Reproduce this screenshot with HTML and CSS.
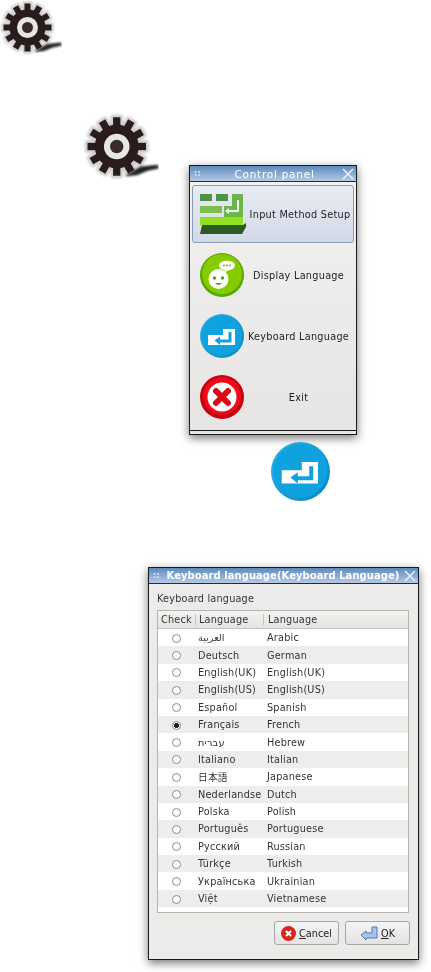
FILE: index.html
```html
<!DOCTYPE html>
<html lang="en">
<head>
  <meta charset="UTF-8" />
  <meta name="viewport" content="width=device-width, initial-scale=1" />
  <title>Control panel</title>
  <link rel="stylesheet" href="styles.css">
</head>
<body>

  <svg class="defs" width="0" height="0">
    <defs>
      <filter id="soft"><feGaussianBlur stdDeviation="0.8" /></filter>
      <g id="gear-shape">
        <circle cx="27.5" cy="27.5" r="18" />
        <rect x="24.5" y="3.5" width="6" height="48" />
        <rect x="24.5" y="3.5" width="6" height="48" transform="rotate(30 27.5 27.5)" />
        <rect x="24.5" y="3.5" width="6" height="48" transform="rotate(60 27.5 27.5)" />
        <rect x="24.5" y="3.5" width="6" height="48" transform="rotate(90 27.5 27.5)" />
        <rect x="24.5" y="3.5" width="6" height="48" transform="rotate(120 27.5 27.5)" />
        <rect x="24.5" y="3.5" width="6" height="48" transform="rotate(150 27.5 27.5)" />
      </g>
      <symbol id="gear" viewBox="0 0 62 55">
        <use href="#gear-shape" fill="#cfcfcf" stroke="#cfcfcf" stroke-width="4.5" stroke-linejoin="round" filter="url(#soft)" />
        <path d="M34 52 L42 47 L47 44 L61 42.5 L62 45.5 L53 47.5 L44 51 Z" fill="#222" filter="url(#soft)" />
        <use href="#gear-shape" fill="#2a1c1c" />
        <circle cx="27.5" cy="27.5" r="10.5" fill="#e8e6e4" />
        <circle cx="27.5" cy="27.5" r="5.5" fill="#3a2a2a" />
      </symbol>
      <linearGradient id="blue-disc" x1="0" y1="0" x2="1" y2="1">
        <stop offset="0" stop-color="#2fb4e8" />
        <stop offset="1" stop-color="#0a84c0" />
      </linearGradient>
      <symbol id="enter-disc" viewBox="0 0 44 44">
        <circle cx="22" cy="22" r="22" fill="url(#blue-disc)" />
        <circle cx="22" cy="21.5" r="20" fill="#0fa2de" />
        <path d="M8 21 H23 V15 H35 V31 H8 Z" fill="#fff" />
        <path d="M28.5 18 H31.5 V28.5 H20 V31 L14.5 26.5 L20 22.5 V25.5 H28.5 Z" fill="#0fa2de" />
      </symbol>
    </defs>
  </svg>

  <svg class="gear-small" width="62" height="55"><use href="#gear" /></svg>
  <svg class="gear-large" width="76" height="67"><use href="#gear" /></svg>

  <section class="window panel">
    <header class="titlebar">
      <span class="grip">::</span>
      <span class="title">Control panel</span>
      <svg class="close" width="12" height="12" viewBox="0 0 12 12"><path d="M1 1 L11 11 M11 1 L1 11" /></svg>
    </header>
    <div class="panel-body">
      <button class="panel-item active">
        <svg width="48" height="42" viewBox="0 0 48 42">
          <path d="M3 32 H44 L47 30 V34 L43 41 H1 Z" fill="#2c5a22" />
          <rect x="1" y="1" width="12" height="7" fill="#4d9248" />
          <rect x="17" y="1" width="12" height="7" fill="#4d9248" />
          <path d="M33 1 H44 V24 H25 V13 H33 Z" fill="#6cb54c" />
          <rect x="1" y="13" width="22" height="7" fill="#7cc04a" />
          <path d="M38 7 H40 V19 H30 V21 L26 18 L30 15 V17 H38 Z" fill="#eef7e4" />
          <rect x="1" y="24" width="43" height="8" fill="#90e020" />
        </svg>
        <span class="item-label">Input Method Setup</span>
      </button>
      <button class="panel-item">
        <svg width="44" height="44" viewBox="0 0 44 44">
          <circle cx="22" cy="22" r="22" fill="#58a800" />
          <circle cx="22" cy="21" r="20" fill="#84cc00" />
          <circle cx="18.5" cy="26" r="10" fill="#fff" />
          <circle cx="14.5" cy="25" r="1.7" fill="#5aa000" />
          <circle cx="22.5" cy="25" r="1.7" fill="#5aa000" />
          <path d="M15 30 H22 Q18.5 34 15 30 Z" fill="#5aa000" />
          <path d="M25 17 L22 21 L29 17 Z" fill="#fff" />
          <ellipse cx="27" cy="12.5" rx="8" ry="4.8" fill="#fff" />
          <circle cx="24" cy="12.5" r="1" fill="#6ab000" />
          <circle cx="27" cy="12.5" r="1" fill="#6ab000" />
          <circle cx="30" cy="12.5" r="1" fill="#6ab000" />
        </svg>
        <span class="item-label">Display Language</span>
      </button>
      <button class="panel-item">
        <svg width="44" height="44"><use href="#enter-disc" /></svg>
        <span class="item-label">Keyboard Language</span>
      </button>
      <button class="panel-item">
        <svg width="44" height="44" viewBox="0 0 44 44">
          <circle cx="22" cy="22" r="22" fill="#c80010" />
          <circle cx="22" cy="21" r="19" fill="#ee0a1a" />
          <circle cx="22" cy="22" r="14.5" fill="#fff" />
          <path d="M16 16 L28 28 M28 16 L16 28" stroke="#d80a18" stroke-width="6" stroke-linecap="round" />
        </svg>
        <span class="item-label">Exit</span>
      </button>
    </div>
    <div class="panel-foot"></div>
  </section>

  <svg class="enter-large" width="59" height="59"><use href="#enter-disc" /></svg>

  <section class="window dialog">
    <header class="titlebar">
      <span class="grip">::</span>
      <span class="title bold">Keyboard language(Keyboard Language)</span>
      <svg class="close" width="12" height="12" viewBox="0 0 12 12"><path d="M1 1 L11 11 M11 1 L1 11" /></svg>
    </header>
    <div class="dialog-body">
      <p class="dialog-label">Keyboard language</p>
      <div class="list">
        <div class="list-head">
          <span class="col-check">Check</span>
          <span class="col-native">Language</span>
          <span class="col-english">Language</span>
        </div>
        <div class="row"><span class="col-check"><i class="radio"></i></span><span class="col-native">العربية</span><span class="col-english">Arabic</span></div>
        <div class="row"><span class="col-check"><i class="radio"></i></span><span class="col-native">Deutsch</span><span class="col-english">German</span></div>
        <div class="row"><span class="col-check"><i class="radio"></i></span><span class="col-native">English(UK)</span><span class="col-english">English(UK)</span></div>
        <div class="row"><span class="col-check"><i class="radio"></i></span><span class="col-native">English(US)</span><span class="col-english">English(US)</span></div>
        <div class="row"><span class="col-check"><i class="radio"></i></span><span class="col-native">Español</span><span class="col-english">Spanish</span></div>
        <div class="row"><span class="col-check"><i class="radio on"></i></span><span class="col-native">Français</span><span class="col-english">French</span></div>
        <div class="row"><span class="col-check"><i class="radio"></i></span><span class="col-native">עברית</span><span class="col-english">Hebrew</span></div>
        <div class="row"><span class="col-check"><i class="radio"></i></span><span class="col-native">Italiano</span><span class="col-english">Italian</span></div>
        <div class="row"><span class="col-check"><i class="radio"></i></span><span class="col-native">日本語</span><span class="col-english">Japanese</span></div>
        <div class="row"><span class="col-check"><i class="radio"></i></span><span class="col-native">Nederlandse</span><span class="col-english">Dutch</span></div>
        <div class="row"><span class="col-check"><i class="radio"></i></span><span class="col-native">Polska</span><span class="col-english">Polish</span></div>
        <div class="row"><span class="col-check"><i class="radio"></i></span><span class="col-native">Português</span><span class="col-english">Portuguese</span></div>
        <div class="row"><span class="col-check"><i class="radio"></i></span><span class="col-native">Русский</span><span class="col-english">Russian</span></div>
        <div class="row"><span class="col-check"><i class="radio"></i></span><span class="col-native">Türkçe</span><span class="col-english">Turkish</span></div>
        <div class="row"><span class="col-check"><i class="radio"></i></span><span class="col-native">Українська</span><span class="col-english">Ukrainian</span></div>
        <div class="row"><span class="col-check"><i class="radio"></i></span><span class="col-native">Việt</span><span class="col-english">Vietnamese</span></div>
      </div>
      <div class="actions">
        <button class="btn">
          <svg width="15" height="15" viewBox="0 0 15 15">
            <circle cx="7.5" cy="7.5" r="7.5" fill="#d8281c" />
            <path d="M5 5 L10 10 M10 5 L5 10" stroke="#fff" stroke-width="2" />
          </svg>
          <span><u>C</u>ancel</span>
        </button>
        <button class="btn">
          <svg width="18" height="15" viewBox="0 0 18 15">
            <path d="M1 9 L6 5 V7 H12 V1 H17 V12 H6 V14 Z" fill="#a8c4e8" stroke="#4a78b8" stroke-width="1" />
          </svg>
          <span><u>O</u>K</span>
        </button>
      </div>
    </div>
  </section>

</body>
</html>
```

FILE: styles.css
```css
* {
  margin: 0;
  padding: 0;
  box-sizing: border-box;
}

html, body {
  height: 972px;
  overflow: hidden;
}

body {
  background: #fff;
  font-family: 'DejaVu Sans', 'Noto Sans CJK JP', sans-serif;
  font-size: 9.7px;
  letter-spacing: 0.2px;
  color: #333;
}

.defs {
  display: block;
  height: 0;
}

/* the source is a scaled-down photo of the screen, so everything is slightly soft */
.window,
.gear-small,
.gear-large,
.enter-large {
  filter: blur(0.3px);
}

.gear-small {
  display: block;
  margin-left: 0;
}

.gear-large {
  display: block;
  margin: 58px 0 0 83px;
}

.window {
  border: 1px solid #1a1a1a;
  background: #ecebea;
  box-shadow: 0 3px 9px rgba(0, 0, 0, 0.55);
}

.titlebar {
  display: flex;
  align-items: center;
  height: 16px;
  padding: 0 2px 0 4px;
  background: linear-gradient(180deg, #5e8abf, #b4cae2);
  border-bottom: 1px solid #1f2c3c;
  color: #fff;
}

.grip {
  font-size: 8px;
  font-weight: bold;
  width: 13px;
  color: #dfe8f2;
}

.title {
  flex: 1;
  text-align: center;
  font-size: 10.5px;
  letter-spacing: 0.75px;
}

.title.bold {
  font-size: 10px;
  font-weight: bold;
  letter-spacing: 0.05px;
  white-space: nowrap;
  padding-right: 4px;
}

.close path {
  stroke: #f2f5f9;
  stroke-width: 1.4;
  fill: none;
}

/* control panel */
.panel {
  width: 168px;
  height: 270px;
  margin: -15px 0 0 189px;
  display: flex;
  flex-direction: column;
}

.panel-body {
  flex: 1;
  display: flex;
  flex-direction: column;
  gap: 3px;
  padding: 3px 2px 0;
  background: linear-gradient(180deg, #f2f1f0, #e6e5e4);
}

.panel-item {
  height: 58px;
  display: flex;
  align-items: center;
  padding-left: 7px;
  border: 1px solid transparent;
  border-radius: 3px;
  background: none;
  font: inherit;
  letter-spacing: 0.28px;
  color: #222;
}

.panel-item.active {
  padding-left: 6px;
  background: linear-gradient(180deg, #e9ecf3, #d2d9e7);
  border-color: #8b9db3;
}

.item-label {
  flex: 1;
  text-align: center;
  white-space: nowrap;
}

.panel-foot {
  height: 4px;
  background: #e8e7e6;
  border-top: 1px solid #1a1a1a;
}

.enter-large {
  display: block;
  margin: 7px 0 0 271px;
}

/* keyboard language dialog */
.dialog {
  width: 271px;
  height: 393px;
  margin: 66px 0 0 148px;
}

.dialog-body {
  padding: 9px 8px 0;
  height: 376px;
  border-bottom: 1px solid #1a1a1a;
}

.dialog-label {
  height: 17px;
  line-height: 12px;
}

.list {
  width: 252px;
  height: 303px;
  background: #fff;
  border: 1px solid #b6b4b1;
}

.list-head,
.row {
  display: flex;
  align-items: center;
}

.list-head {
  height: 18px;
  background: linear-gradient(180deg, #f4f3f2, #e4e3e2);
  border-bottom: 1px solid #c4c2bf;
}

.list-head .col-check {
  text-align: left;
  padding-left: 3px;
}

.list-head .col-native {
  width: 68px;
  border-left: 1px solid #c8c6c3;
  padding-left: 3px;
}

.list-head .col-english {
  border-left: 1px solid #c8c6c3;
  padding-left: 4px;
}

.row {
  height: 17.4px;
}

.row:nth-child(odd) {
  background: #ededec;
}

.col-check {
  width: 37px;
  text-align: center;
}

.col-native {
  width: 72px;
  padding-left: 3px;
  white-space: nowrap;
}

.radio {
  display: inline-block;
  width: 9px;
  height: 9px;
  vertical-align: middle;
  border: 1px solid #8e8c8a;
  border-radius: 50%;
  background: #fff;
}

.radio.on {
  background: radial-gradient(circle, #222 0 2.2px, #fff 2.8px);
}

.actions {
  display: flex;
  justify-content: flex-end;
  gap: 6px;
  margin-top: 8px;
}

.btn {
  width: 65px;
  height: 24px;
  display: flex;
  align-items: center;
  justify-content: center;
  gap: 3px;
  border: 1px solid #a8a6a3;
  border-radius: 3px;
  background: linear-gradient(180deg, #f6f5f5, #e4e3e2);
  font: inherit;
  color: #222;
}
```
